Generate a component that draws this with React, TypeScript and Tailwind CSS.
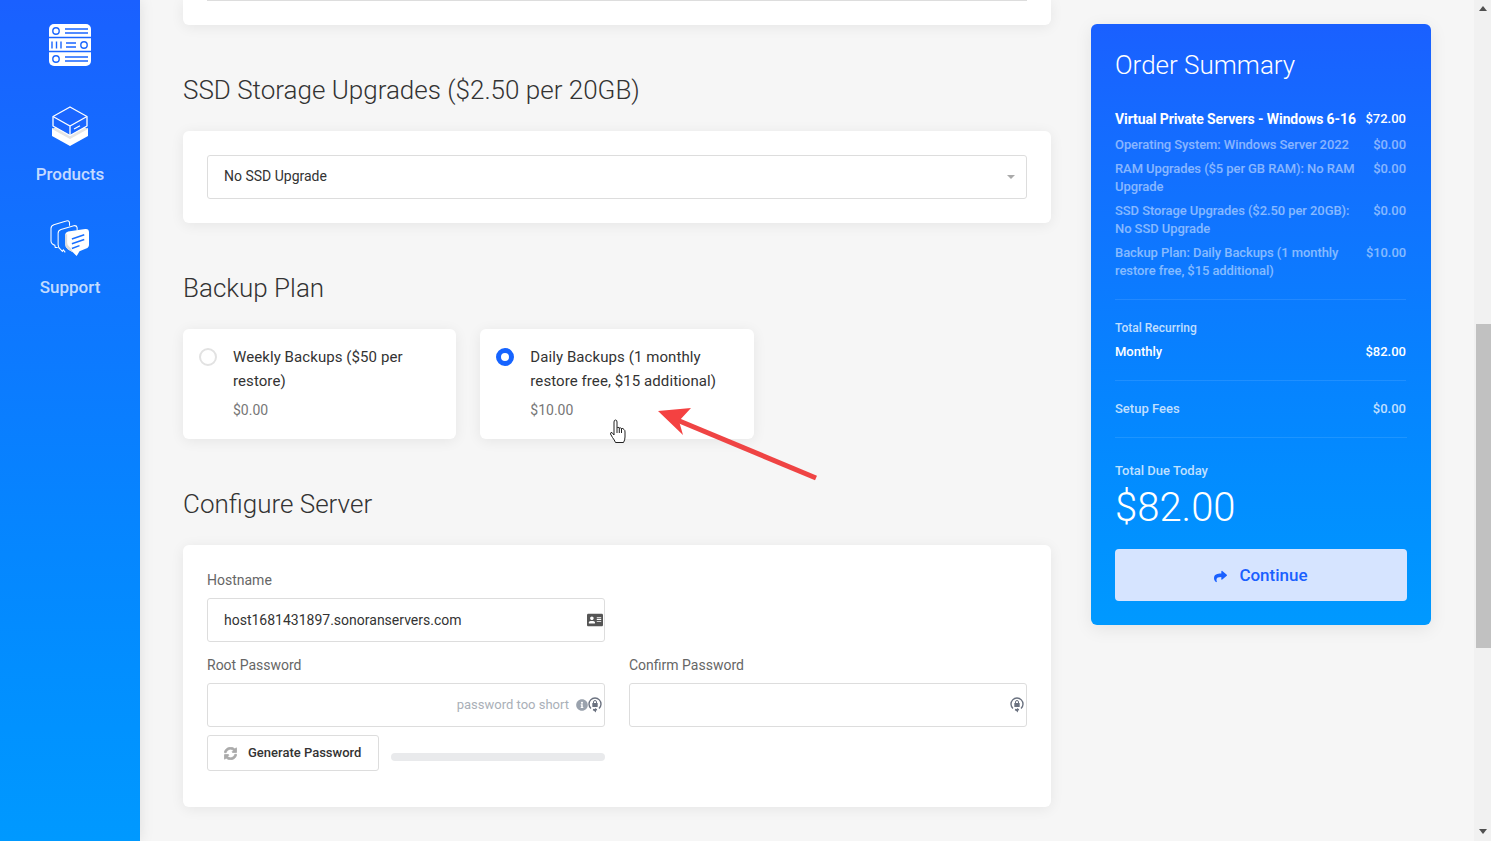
import React from 'react';
import { FaAddressCard, FaInfoCircle, FaShare, FaSyncAlt } from 'react-icons/fa';

const ServerIcon = () => (
	<svg width="42" height="42" viewBox="0 0 42 42" fill="none">
		<rect width="42" height="42" rx="5" fill="#fff" />
		<g stroke="#1a66ff" strokeWidth="1.4">
			<path d="M0 13.5H42M0 27.5H42" />
			<circle cx="7" cy="7" r="3.2" />
			<circle cx="35" cy="21" r="3.2" />
			<circle cx="7" cy="35" r="3.2" />
			<path d="M16 5H39M16 9H39M3 17.5V24.5M7.5 17.5V24.5M12 17.5V24.5M17 19H27M17 23H27M16 33H39M16 37H39" />
		</g>
	</svg>
);

const BoxIcon = () => (
	<svg width="38" height="40" viewBox="0 0 38 40" fill="none">
		<path d="M1 22V30L19 40L37 30V22L19 32Z" fill="#fff" />
		<path d="M5 21L19 29L33 21L37 23L19 33L1 23Z" fill="#e4e4e4" />
		<path d="M19 1L36 10.5V20L19 29.5L2 20V10.5Z" fill="#1a66ff" stroke="#fff" strokeWidth="1.3" strokeLinejoin="round" />
		<path d="M2 10.5L19 20L36 10.5M19 20V29.5M23 23L29 19.7" stroke="#fff" strokeWidth="1.3" />
	</svg>
);

const ChatIcon = () => (
	<svg width="40" height="38" viewBox="0 0 42 40" fill="none">
		<path d="M8 29H5.5L5 26.500Q1 25 1 22V9Q1 6 4 5L17 1Q20 0 20.500 3V6" stroke="#fff" strokeWidth="1.100" />
		<path d="M16 34L14 31.500L13 33L11 31Q8.500 29 8.500 26V14Q8.500 11 11.500 10L25 6Q28 5.500 28.500 8V11" stroke="#fff" strokeWidth="1.100" />
		<path d="M16 15Q16 13 19 12L37 9.500Q41 9 41 13V26Q41 29 38 30L31 33L28 38L24 34L19 31Q16 29 16 26Z" fill="#fff" />
		<path d="M16 15V26Q16 29 19 31L24 34L22 30L20 28Q18 26 18 24V15Z" fill="#dcdcdc" />
		<path d="M23 20L36 15.500M23 25L36 20.500M23 30L31 27" stroke="#1a6fff" strokeWidth="1.500" />
	</svg>
);

const LockRefresh = () => (
	<svg width="14" height="16" viewBox="0 0 14 16" fill="none">
		<path d="M3 11.500A6 6 0 1 1 11 11.500" stroke="#6b7280" strokeWidth="1.400" />
		<path d="M5 12.500A6 6 0 0 0 9 12.500" stroke="#6b7280" strokeWidth="1.400" />
		<path d="M8 11L5 13L8 15.500Z" fill="#6b7280" />
		<rect x="4.300" y="6" width="5.400" height="4" rx="0.600" fill="#6b7280" />
		<path d="M5.500 6V5Q5.500 3.500 7 3.500Q8.500 3.500 8.500 5V6" stroke="#6b7280" strokeWidth="1" />
	</svg>
);

const SummaryRow = ({ label, price }: { label: string; price: string }) => (
	<div className="flex justify-between gap-2.5 text-[13px] leading-[18px] font-medium tracking-[-0.08px] text-white/50">
		<span>{label}</span>
		<span>{price}</span>
	</div>
);

const Heading = ({ children }: { children: React.ReactNode }) => (
	<h2 className="mt-[47px] mb-[23px] text-[26px] leading-9 font-light text-[#333]">{children}</h2>
);

const Card = ({ className = '', children }: { className?: string; children?: React.ReactNode }) => (
	<div className={`rounded-md bg-white shadow-[0_2px_14px_rgba(0,0,0,0.07)] ${className}`}>{children}</div>
);

const BackupOption = ({ label, price, selected }: { label: string; price: string; selected?: boolean }) => (
	<Card className="flex h-[110px] gap-4 px-4 pt-4">
		<span className={`mt-[3px] h-[18px] w-[18px] shrink-0 rounded-full bg-white ${selected ? 'border-[5px] border-[#1664ff]' : 'border-2 border-[#e2e2e2]'}`} />
		<div>
			<p className="text-[15px] leading-6 tracking-[0.08px] text-[#333]">{label}</p>
			<p className="mt-[5px] text-sm leading-6 text-[#777]">{price}</p>
		</div>
	</Card>
);

export default function App() {
	return (
		<div className="relative flex h-[841px] overflow-hidden bg-[#f6f6f6] font-['Roboto',sans-serif]">
			<aside className="flex w-[140px] shrink-0 flex-col items-center bg-gradient-to-b from-[#1a60ff] to-[#0099ff] pt-6 shadow-[0_0_14px_rgba(0,0,0,0.1)]">
				<ServerIcon />
				<div className="mt-10"><BoxIcon /></div>
				<span className="mt-4 text-[17px] leading-6 font-medium text-white/75">Products</span>
				<div className="mt-[34px]"><ChatIcon /></div>
				<span className="mt-[17px] text-[17px] leading-6 font-medium text-white/75">Support</span>
			</aside>

			<main className="ml-[43px] w-[868px] shrink-0">
				<Card className="h-[25px] rounded-t-none px-6">
					<div className="h-px bg-[#ddd]" />
				</Card>

				<Heading>SSD Storage Upgrades ($2.50 per 20GB)</Heading>
				<Card className="p-6">
					<div className="flex h-11 items-center justify-between rounded-[3px] border border-[#ddd] pr-[11px] pb-0.5 pl-4 text-sm text-[#333]">
						<span>No SSD Upgrade</span>
						<span className="mt-0.5 h-0 w-0 border-x-[4px] border-t-[4px] border-x-transparent border-t-[#aaa]" />
					</div>
				</Card>

				<Heading>Backup Plan</Heading>
				<div className="grid grid-cols-3 gap-6">
					<BackupOption label="Weekly Backups ($50 per restore)" price="$0.00" />
					<BackupOption label="Daily Backups (1 monthly restore free, $15 additional)" price="$10.00" selected />
				</div>

				<Heading>Configure Server</Heading>
				<Card className="h-[262px] p-6">
					<div className="grid grid-cols-2 gap-x-6">
						<div>
							<label className="mt-0.5 block text-sm leading-[18px] text-[#666]">Hostname</label>
							<div className="mt-[9px] flex h-11 items-center justify-between rounded-[3px] border border-[#ddd] pr-px pl-4 text-sm text-[#333]">
								<span>host1681431897.sonoranservers.com</span>
								<FaAddressCard className="text-base text-[#555]" />
							</div>
						</div>
						<div />
						<div>
							<label className="mt-[14px] block text-sm leading-[18px] text-[#666]">Root Password</label>
							<div className="mt-[9px] flex h-11 items-center justify-end rounded-[3px] border border-[#ddd] pr-0.5 text-[13px] text-[#aab0b8]">
								<span className="mr-[7px]">password too short</span>
								<FaInfoCircle className="text-xs text-[#9aa2ad]" />
								<LockRefresh />
							</div>
							<div className="mt-2 flex items-center gap-3">
								<button className="flex h-9 w-[172px] items-center gap-[11px] rounded-[3px] border border-[#ddd] pl-4 text-[13px] font-medium text-[#333]">
									<FaSyncAlt className="text-[13px] text-[#aaa]" stroke="currentColor" strokeWidth={30} />
									Generate Password
								</button>
								<div className="mt-[8px] h-2 flex-1 rounded-full bg-[#e9eaec]" />
							</div>
						</div>
						<div>
							<label className="mt-[14px] block text-sm leading-[18px] text-[#666]">Confirm Password</label>
							<div className="mt-[9px] flex h-11 items-center justify-end rounded-[3px] border border-[#ddd] pr-0.5">
								<LockRefresh />
							</div>
						</div>
					</div>
				</Card>
			</main>

			<section className="mt-6 ml-10 h-[601px] w-[340px] shrink-0 rounded-md bg-gradient-to-b from-[#1a60ff] to-[#0099ff] px-6 pt-[23px] text-white shadow-[0_4px_18px_rgba(0,0,0,0.08)]">
				<h2 className="text-[26px] leading-9 font-light">Order Summary</h2>
				<div className="mt-[27px] flex flex-col gap-1.5 pr-px">
					<div className="mb-0.5 flex justify-between gap-2 text-[13px] leading-[18px] font-medium text-white">
						<span className="text-sm leading-[18px] font-bold tracking-[-0.1px] whitespace-nowrap">Virtual Private Servers - Windows 6-16</span>
						<span>$72.00</span>
					</div>
					<SummaryRow label="Operating System: Windows Server 2022" price="$0.00" />
					<SummaryRow label="RAM Upgrades ($5 per GB RAM): No RAM Upgrade" price="$0.00" />
					<SummaryRow label="SSD Storage Upgrades ($2.50 per 20GB): No SSD Upgrade" price="$0.00" />
					<SummaryRow label="Backup Plan: Daily Backups (1 monthly restore free, $15 additional)" price="$10.00" />
				</div>
				<div className="mt-[19px] mr-px h-px bg-white/10" />
				<p className="mt-[19px] text-xs leading-[18px] font-medium text-white/75">Total Recurring</p>
				<div className="mt-1.5 mr-px flex justify-between text-[13px] leading-[18px] font-medium">
					<span>Monthly</span>
					<span>$82.00</span>
				</div>
				<div className="mt-[19px] mr-px h-px bg-white/10" />
				<div className="mt-[19px] mr-px flex justify-between text-[13px] leading-[18px] font-medium text-white/75">
					<span>Setup Fees</span>
					<span>$0.00</span>
				</div>
				<div className="mt-[19px] h-px bg-white/10" />
				<p className="mt-6 text-[13px] leading-[18px] font-medium text-white/75">Total Due Today</p>
				<p className="mt-1 text-[40px] leading-[48px] font-light">$82.00</p>
				<button className="mt-[17px] flex h-[52px] w-full items-center justify-center gap-3 rounded-[4px] bg-[#d6e4ff] pt-0.5 text-[17px] font-medium text-[#1a60ff]">
					<FaShare className="text-[13px]" />
					Continue
				</button>
			</section>

			<div className="absolute top-0 right-0 bottom-0 flex w-[17px] flex-col items-center bg-[#f1f1f1]">
				<span className="mt-[6px] h-0 w-0 border-x-[4px] border-b-[5px] border-x-transparent border-b-[#505050]" />
				<div className="mt-[313px] h-[324px] w-[15px] self-end bg-[#c1c1c1]" />
				<span className="mt-[181px] h-0 w-0 border-x-[4px] border-t-[5px] border-x-transparent border-t-[#505050]" />
			</div>

			{/* annotation arrow */}
			<svg className="absolute top-[405px] left-[655px]" width="165" height="80" viewBox="0 0 165 80" fill="none">
				<path d="M161 73L22 15" stroke="#ef4444" strokeWidth="5" />
				<path d="M3 6L36 3L24 16L28 30Z" fill="#f44141" />
			</svg>

			{/* mouse cursor */}
			<svg className="absolute top-[419px] left-[609px]" width="18" height="25" viewBox="0 0 17 25" fill="#fff" stroke="#222" strokeWidth="1">
				<path d="M4.500 3Q4.500 1 6 1Q7.500 1 7.500 3V9Q8 8 9.500 8.500L9.800 9Q11 8.500 12 9.500Q13.500 9 14.500 10.500Q15.500 11 15.500 13V18Q15.500 21 14 23.500H6Q5 21 3 18.500L1 15Q1 13 2.500 13.500L4.500 16Z" />
				<path d="M7.500 9V14M9.800 9V14M12 9.500V14" />
			</svg>
		</div>
	);
}
